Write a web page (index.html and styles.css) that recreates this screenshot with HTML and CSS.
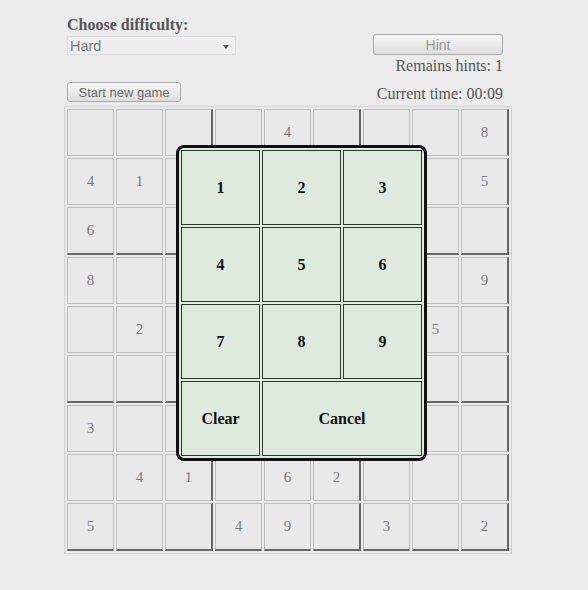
FILE: index.html
```html
<!DOCTYPE html>
<html>
<head>
<meta charset="utf-8">
<link rel="stylesheet" href="styles.css">
</head>
<body>
<div class="game">
  <div class="label">Choose difficulty:</div>
  <div class="row-b">
    <div class="select"><span>Hard</span><span class="arrow"></span></div>
    <div class="btn hint">Hint</div>
  </div>
  <div class="row-c">Remains hints: 1</div>
  <div class="row-d">
    <div class="btn start">Start new game</div>
    <div class="time">Current time: 00:09</div>
  </div>
  <div class="board">
    <table class="grid">
      <tr><td></td><td></td><td class="r"></td><td></td><td>4</td><td class="r"></td><td></td><td></td><td class="r">8</td></tr>
      <tr><td>4</td><td>1</td><td class="r"></td><td></td><td></td><td class="r"></td><td></td><td></td><td class="r">5</td></tr>
      <tr class="b"><td>6</td><td></td><td class="r"></td><td></td><td></td><td class="r"></td><td></td><td></td><td class="r"></td></tr>
      <tr><td>8</td><td></td><td class="r"></td><td></td><td></td><td class="r"></td><td></td><td></td><td class="r">9</td></tr>
      <tr><td></td><td>2</td><td class="r"></td><td></td><td></td><td class="r"></td><td></td><td>5</td><td class="r"></td></tr>
      <tr class="b"><td></td><td></td><td class="r"></td><td></td><td></td><td class="r"></td><td></td><td></td><td class="r"></td></tr>
      <tr><td>3</td><td></td><td class="r"></td><td></td><td></td><td class="r"></td><td></td><td></td><td class="r"></td></tr>
      <tr><td></td><td>4</td><td class="r">1</td><td></td><td>6</td><td class="r">2</td><td></td><td></td><td class="r"></td></tr>
      <tr class="b"><td>5</td><td></td><td class="r"></td><td>4</td><td>9</td><td class="r"></td><td>3</td><td></td><td class="r">2</td></tr>
    </table>
    <div class="picker">
      <div class="key">1</div>
      <div class="key">2</div>
      <div class="key">3</div>
      <div class="key">4</div>
      <div class="key">5</div>
      <div class="key">6</div>
      <div class="key">7</div>
      <div class="key">8</div>
      <div class="key">9</div>
      <div class="key">Clear</div>
      <div class="key wide">Cancel</div>
    </div>
  </div>
</div>
</body>
</html>
```

FILE: styles.css
```css
html, body {
  margin: 0;
  padding: 0;
  background: #ebebeb;
}
body {
  font-family: "Liberation Serif", "Times New Roman", serif;
  color: #555;
}
.game {
  width: 448px;
  margin-left: 64px;
  padding-top: 15px;
}
.label {
  font-weight: bold;
  font-size: 16px;
  line-height: 19px;
  padding-left: 3px;
  color: #555;
}
.row-b {
  display: flex;
  justify-content: space-between;
  align-items: flex-end;
  padding: 0 9px 0 3px;
}
.select {
  width: 159px;
  height: 17px;
  border: 1px solid #dcdcdc;
  background: #eeeeee;
  display: flex;
  align-items: center;
  justify-content: space-between;
  padding: 0 6px 0 2px;
  box-sizing: content-box;
  font-family: "Liberation Sans", Arial, sans-serif;
  font-size: 14.5px;
  color: #7a7a7a;
}
.arrow {
  width: 0;
  height: 0;
  border-left: 3.5px solid transparent;
  border-right: 3.5px solid transparent;
  border-top: 4px solid #555;
  margin-top: 2px;
}
.btn {
  font-family: "Liberation Sans", Arial, sans-serif;
  font-size: 13px;
  border: 1px solid #a9a9a9;
  border-radius: 3px;
  background: linear-gradient(#f6f6f6, #dedede);
  display: flex;
  align-items: center;
  justify-content: center;
  box-sizing: border-box;
}
.hint {
  width: 130px;
  height: 21px;
  color: #9a9a9a;
  font-size: 14px;
}
.row-c {
  text-align: right;
  font-size: 16px;
  line-height: 18px;
  margin-top: 2px;
  padding-right: 9px;
}
.row-d {
  display: flex;
  justify-content: space-between;
  align-items: center;
  height: 24px;
  margin-top: 5px;
  padding: 0 9px 0 3px;
}
.start {
  width: 114px;
  height: 20px;
  color: #6a6a6a;
}
.time {
  font-size: 16px;
  line-height: 18px;
  margin-top: 4px;
}
.board {
  position: relative;
  margin-top: 2px;
  width: 448px;
}
.grid {
  border-collapse: separate;
  border-spacing: 2px;
  border: 1px solid #d2d2d2;
}
.grid td {
  width: 45px;
  height: 45px;
  padding: 0;
  border: 1px solid #bcbcbc;
  text-align: center;
  vertical-align: middle;
  font-size: 15px;
  color: #7b7b7b;
  background: #e9e9e9;
}
.grid td.r {
  border-right: 2px solid #666;
}
.grid tr.b td {
  border-bottom: 2px solid #666;
}
.picker {
  position: absolute;
  left: 112px;
  top: 39px;
  width: 241px;
  height: 306px;
  border: 3px solid #111;
  border-radius: 8px;
  background: #e1ece0;
  display: grid;
  grid-template-columns: repeat(3, 79px);
  grid-template-rows: repeat(4, 75px);
  gap: 2px;
  padding: 2px;
  box-sizing: content-box;
}
.key {
  border: 1px solid #2c362c;
  background: #deeadd;
  display: flex;
  align-items: center;
  justify-content: center;
  font-weight: bold;
  font-size: 16px;
  color: #111;
  box-sizing: border-box;
}
.wide {
  grid-column: span 2;
}
```
